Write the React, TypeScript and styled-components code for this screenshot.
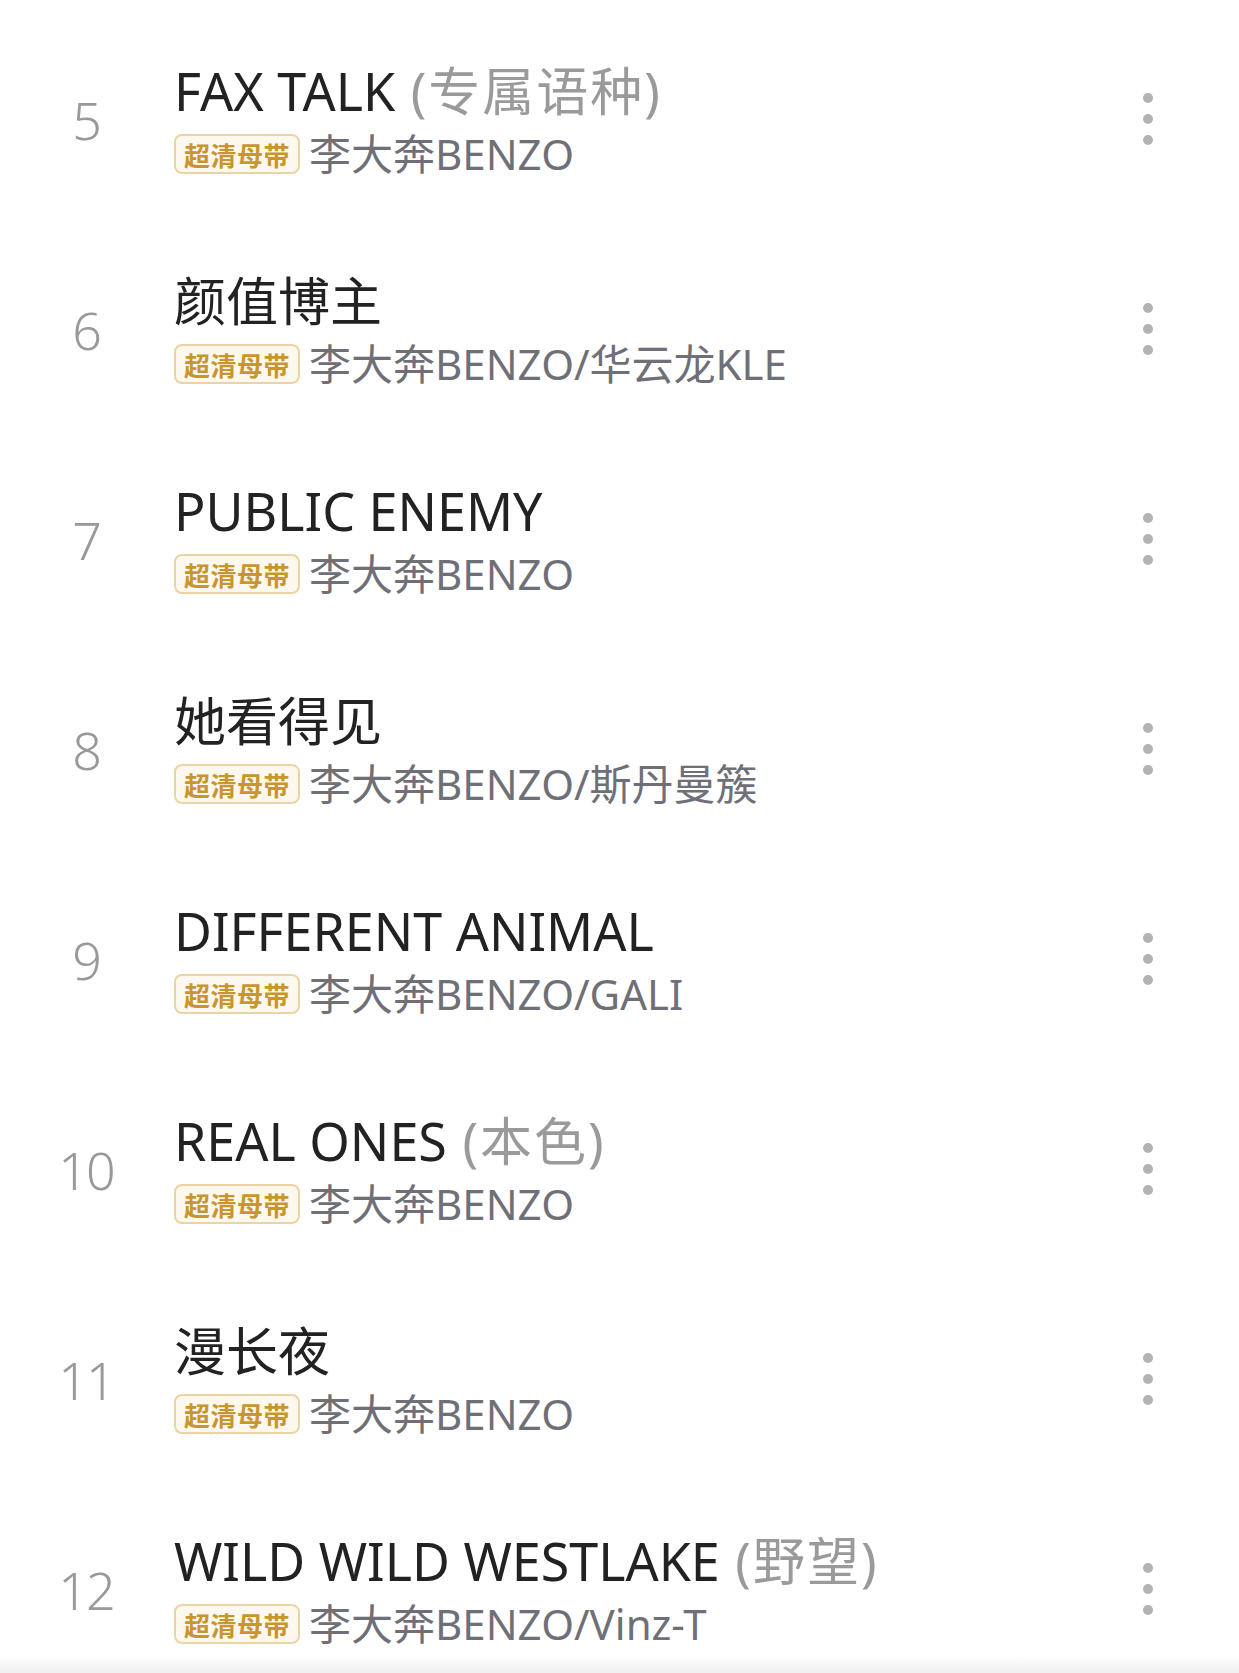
import styled, { createGlobalStyle } from 'styled-components';

const GlobalStyle = createGlobalStyle`
  html, body {
    margin: 0;
    padding: 0;
    background: #ffffff;
  }
  body {
    font-family: "Noto Sans", "Noto Sans CJK SC", sans-serif;
    -webkit-font-smoothing: antialiased;
  }
`;

const List = styled.div`
  padding-top: 14px;
  width: 1239px;
  height: 1673px;
  overflow: hidden;
  position: relative;
`;

const Row = styled.div`
  height: 210px;
  display: grid;
  grid-template-columns: 172px 1fr 60px;
  align-items: center;
  column-gap: 2px;
  padding-right: 61px;
`;

const Index = styled.div`
  text-align: center;
  font-size: 52px;
  font-weight: 300;
  color: #999999;
  letter-spacing: -2px;
`;

const Info = styled.div`
  display: flex;
  flex-direction: column;
  gap: 12px;
  min-width: 0;
`;

const Title = styled.div`
  font-size: 52px;
  line-height: 60px;
  margin-top: -2px;
  color: #222222;
  white-space: nowrap;
`;

const Alias = styled.span`
  color: #9a9a9a;
  letter-spacing: 2px;
`;

const Sub = styled.div`
  display: flex;
  align-items: center;
  gap: 9px;
  height: 42px;
`;

const Badge = styled.span`
  box-sizing: border-box;
  height: 40px;
  padding: 0 8px;
  display: inline-flex;
  align-items: center;
  border: 2px solid #ebd3a3;
  border-radius: 8px;
  background: #fdf8ee;
  color: #c8952f;
  font-family: "Noto Sans CJK SC", sans-serif;
  font-size: 26px;
  font-weight: 700;
  letter-spacing: 0.5px;
`;

const Artist = styled.span`
  font-size: 42px;
  line-height: 42px;
  color: #6f6f78;
  white-space: nowrap;
`;

const More = styled.div`
  display: flex;
  justify-content: center;
  align-items: center;
`;

const BottomShade = styled.div`
  position: fixed;
  left: 0;
  right: 0;
  bottom: 0;
  height: 18px;
  background: linear-gradient(to bottom, rgba(245, 245, 245, 0), rgba(240, 240, 240, 1));
  pointer-events: none;
`;

type Song = {
  no: number;
  title: string;
  alias?: string;
  artist: string;
};

const songs: Song[] = [
  { no: 5, title: 'FAX TALK', alias: '(专属语种)', artist: '李大奔BENZO' },
  { no: 6, title: '颜值博主', artist: '李大奔BENZO/华云龙KLE' },
  { no: 7, title: 'PUBLIC ENEMY', artist: '李大奔BENZO' },
  { no: 8, title: '她看得见', artist: '李大奔BENZO/斯丹曼簇' },
  { no: 9, title: 'DIFFERENT ANIMAL', artist: '李大奔BENZO/GALI' },
  { no: 10, title: 'REAL ONES', alias: '(本色)', artist: '李大奔BENZO' },
  { no: 11, title: '漫长夜', artist: '李大奔BENZO' },
  { no: 12, title: 'WILD WILD WESTLAKE', alias: '(野望)', artist: '李大奔BENZO/Vinz-T' },
];

function MoreIcon() {
  return (
    <svg width="12" height="54" viewBox="0 0 12 54">
      <circle cx="6" cy="6" r="5" fill="#b3b3b3" />
      <circle cx="6" cy="27" r="5" fill="#b3b3b3" />
      <circle cx="6" cy="48" r="5" fill="#b3b3b3" />
    </svg>
  );
}

export default function App() {
  return (
    <>
      <GlobalStyle />
      <List>
        {songs.map((song) => (
          <Row key={song.no}>
            <Index>{song.no}</Index>
            <Info>
              <Title>
                {song.title}
                {song.alias && <Alias> {song.alias}</Alias>}
              </Title>
              <Sub>
                <Badge>超清母带</Badge>
                <Artist>{song.artist}</Artist>
              </Sub>
            </Info>
            <More>
              <MoreIcon />
            </More>
          </Row>
        ))}
      </List>
      <BottomShade />
    </>
  );
}
